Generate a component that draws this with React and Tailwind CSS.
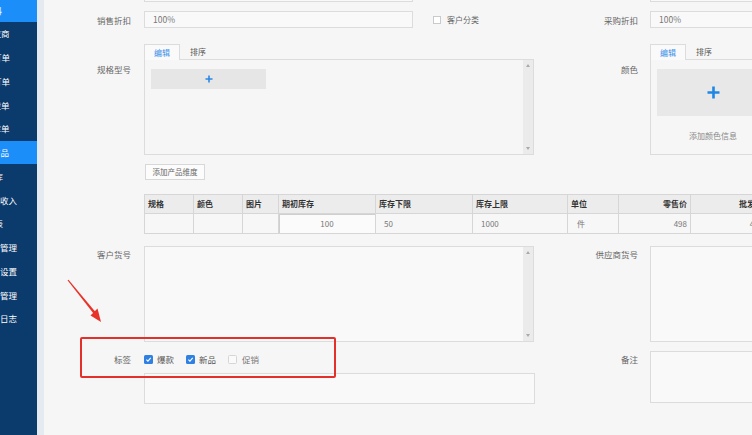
import React from "react";

const sideItems = [
  { t: "商品资料", ml: "ml-[-32px]", active: true },
  { t: "供应商", ml: "ml-[-16px]" },
  { t: "采购订单", ml: "ml-[-24px]" },
  { t: "销售订单", ml: "ml-[-24px]" },
  { t: "调拨单", ml: "ml-[-16px]" },
  { t: "入库单", ml: "ml-[-16px]" },
  { t: "商品", ml: "ml-[-8px]", active: true },
  { t: "仓库", ml: "ml-[-14px]" },
  { t: "其他收入", ml: "ml-[-17px]" },
  { t: "报表", ml: "ml-[-14px]" },
  { t: "仓库管理", ml: "ml-[-17px]" },
  { t: "打印设置", ml: "ml-[-17px]" },
  { t: "账户管理", ml: "ml-[-17px]" },
  { t: "操作日志", ml: "ml-[-17px]" },
];

const LBL = "text-[8.5px] leading-[12px] text-[#666]";
const BOX = "border border-[#dcdcdc] bg-[#f9f9f9]";

function Scrollbar() {
  return (
    <div className="w-[10px] shrink-0 bg-[#ebebeb] flex flex-col justify-between items-center py-[4px]">
      <div className="w-0 h-0 border-l-[2px] border-r-[2px] border-b-[3px] border-l-transparent border-r-transparent border-b-[#aaa]" />
      <div className="w-0 h-0 border-l-[2px] border-r-[2px] border-t-[3px] border-l-transparent border-r-transparent border-t-[#aaa]" />
    </div>
  );
}

function Tabs() {
  return (
    <div className="flex h-[16px]">
      <div className="w-[36px] border border-b-0 border-[#dcdcdc] bg-[#fafafa] flex items-center justify-center text-[8px] text-[#3d8ee8]">
        编辑
      </div>
      <div className="w-[36px] border-b border-[#dcdcdc] flex items-center justify-center text-[8px] text-[#555]">
        排序
      </div>
      <div className="flex-1 border-b border-[#dcdcdc]" />
    </div>
  );
}

function Check({ on }) {
  if (on)
    return (
      <div className="w-[9px] h-[9px] rounded-[1.5px] bg-[#2f80e2] flex items-center justify-center shrink-0">
        <svg width="7" height="7" viewBox="0 0 10 10">
          <path d="M2 5.2 L4.2 7.3 L8.2 2.8" stroke="#fff" strokeWidth="1.6" fill="none" />
        </svg>
      </div>
    );
  return <div className="w-[9px] h-[9px] rounded-[1.5px] border border-[#d6d6d6] bg-[#fafafa] shrink-0" />;
}

const cols = [
  { h: "规格", d: "", w: "w-[49px]", dc: "" },
  { h: "颜色", d: "", w: "w-[49px]", dc: "" },
  { h: "图片", d: "", w: "w-[36px]", dc: "" },
  { h: "期初库存", d: "100", w: "w-[97px]", dc: "justify-center bg-[#fbfbfb] shadow-[inset_0_1px_0_#cfcfcf,inset_1px_0_0_#cfcfcf]" },
  { h: "库存下限", d: "50", w: "w-[97px]", dc: "pl-[8px]" },
  { h: "库存上限", d: "1000", w: "w-[95px]", dc: "pl-[8px]" },
  { h: "单位", d: "件", w: "w-[51px]", dc: "pl-[9px]" },
  { h: "零售价", d: "498", w: "w-[72px]", dc: "justify-end pr-[3px]", hr: true },
  { h: "批发价", d: "498", w: "w-[76px]", dc: "justify-end pr-[3px]", hr: true },
];

export default function App() {
  return (
    <div className="relative w-[752px] h-[435px] overflow-hidden flex bg-[#f6f6f6] font-['Noto_Sans_CJK_SC','Liberation_Sans',sans-serif]">
      {/* sidebar */}
      <div className="w-[37px] shrink-0 bg-[#0b3a6c] overflow-hidden">
        <div className="mt-[-2px] flex flex-col">
          {sideItems.map((it, i) => (
            <div
              key={i}
              className={
                "h-[23.75px] flex items-center text-[8.5px] text-white " +
                (it.active ? "bg-[#1c8ef9]" : "")
              }
            >
              <span className={"shrink-0 whitespace-nowrap " + it.ml}>{it.t}</span>
            </div>
          ))}
        </div>
      </div>
      <div className="w-[7px] shrink-0 bg-[#e5eaf0]" />

      {/* main */}
      <div className="flex-1 flex flex-col overflow-hidden">
        {/* sliver of previous row */}
        <div className="mt-[-15px] h-[17px] flex shrink-0">
          <div className="w-[100px] shrink-0" />
          <div className={"w-[269px] shrink-0 " + BOX} />
          <div className="w-[121px] shrink-0" />
          <div className="w-[116px] shrink-0" />
          <div className={"w-[260px] shrink-0 " + BOX} />
        </div>

        {/* row 1 */}
        <div className="mt-[9px] h-[17px] flex items-center shrink-0">
          <div className={"w-[100px] pr-[13px] text-right shrink-0 " + LBL}>销售折扣</div>
          <div className="w-[390px] shrink-0 flex items-center h-full">
            <div className={"w-[269px] h-full flex items-center pl-[8px] text-[8.5px] text-[#777] " + BOX}>100%</div>
            <div className="ml-[20px] w-[8px] h-[8px] border border-[#cacaca] bg-white" />
            <div className="ml-[6px] text-[8px] text-[#666]">客户分类</div>
          </div>
          <div className={"w-[116px] pr-[12px] text-right shrink-0 " + LBL}>采购折扣</div>
          <div className={"w-[260px] h-full shrink-0 flex items-center pl-[8px] text-[8.5px] text-[#777] " + BOX}>100%</div>
        </div>

        {/* row 2: spec & color */}
        <div className="mt-[16px] flex shrink-0">
          <div className={"w-[100px] pr-[13px] pt-[19px] text-right shrink-0 " + LBL}>规格型号</div>
          <div className="w-[390px] shrink-0">
            <Tabs />
            <div className="h-[95px] flex border border-t-0 border-[#dcdcdc]">
              <div className="flex-1 pl-[6px] pt-[9px]">
                <div className="w-[115px] h-[20px] bg-[#e6e6e6] flex items-center justify-center">
                  <svg width="8" height="8" viewBox="0 0 8 8">
                    <path d="M4 0.5 V7.5 M0.5 4 H7.5" stroke="#2d86e6" strokeWidth="1.6" />
                  </svg>
                </div>
              </div>
              <Scrollbar />
            </div>
          </div>
          <div className={"w-[116px] pr-[12px] pt-[19px] text-right shrink-0 " + LBL}>颜色</div>
          <div className="w-[126px] shrink-0">
            <Tabs />
            <div className="h-[95px] border border-t-0 border-[#dcdcdc] px-[6px] pt-[9px] flex flex-col items-center">
              <div className="w-full h-[47px] bg-[#e8e8e8] flex items-center justify-center">
                <svg width="13" height="13" viewBox="0 0 13 13">
                  <path d="M6.5 0.5 V12.5 M0.5 6.5 H12.5" stroke="#1f86e6" strokeWidth="2.6" />
                </svg>
              </div>
              <div className="mt-[15px] text-[8px] leading-[10px] text-[#888]">添加颜色信息</div>
            </div>
          </div>
        </div>

        {/* button row */}
        <div className="mt-[9px] h-[16px] flex shrink-0">
          <div className="w-[101px] shrink-0" />
          <div className="w-[60px] h-full border border-[#d8d8d8] bg-[#fcfcfc] flex items-center justify-center text-[7.5px] text-[#666]">
            添加产品维度
          </div>
        </div>

        {/* table */}
        <div className="mt-[14px] flex shrink-0">
          <div className="w-[100px] shrink-0" />
          <div className="flex flex-col border-t border-l border-[#d6d6d6] shrink-0">
            <div className="flex h-[19px] bg-[#ececec]">
              {cols.map((c, i) => (
                <div
                  key={i}
                  className={
                    "shrink-0 h-full border-r border-b border-[#d6d6d6] flex items-center text-[8px] font-bold text-[#333] " +
                    c.w +
                    (c.hr ? " justify-end pr-[3px]" : " pl-[3px]")
                  }
                >
                  {c.h}
                </div>
              ))}
            </div>
            <div className="flex h-[20px] bg-[#f7f7f7]">
              {cols.map((c, i) => (
                <div
                  key={i}
                  className={
                    "shrink-0 h-full border-r border-b border-[#d6d6d6] flex items-center text-[8px] text-[#777] " +
                    c.w +
                    " " +
                    c.dc
                  }
                >
                  {c.d}
                </div>
              ))}
            </div>
          </div>
        </div>

        {/* customer code row */}
        <div className="mt-[12px] flex shrink-0">
          <div className={"w-[100px] pr-[13px] pt-[2px] text-right shrink-0 " + LBL}>客户货号</div>
          <div className={"w-[390px] h-[96px] shrink-0 flex justify-end " + BOX}>
            <Scrollbar />
          </div>
          <div className={"w-[116px] pr-[12px] pt-[2px] text-right shrink-0 " + LBL}>供应商货号</div>
          <div className={"w-[260px] h-[96px] shrink-0 " + BOX} />
        </div>

        {/* tags row */}
        <div className="mt-[9px] flex shrink-0">
          <div className={"w-[100px] pr-[13px] pt-[2px] text-right shrink-0 " + LBL}>标签</div>
          <div className="w-[390px] shrink-0">
            <div className="h-[16px] flex items-center text-[8.5px] text-[#555]">
              <Check on />
              <span className="ml-[4px]">爆款</span>
              <span className="ml-[12px]"><Check on /></span>
              <span className="ml-[4px]">新品</span>
              <span className="ml-[12px]"><Check /></span>
              <span className="ml-[5px] text-[#777]">促销</span>
            </div>
            <div className={"mt-[6px] h-[31px] w-[391px] " + BOX} />
          </div>
          <div className={"w-[116px] pr-[12px] pt-[2px] text-right shrink-0 " + LBL}>备注</div>
          <div className={"w-[260px] h-[52px] shrink-0 " + BOX} />
        </div>
      </div>

      {/* annotation overlays */}
      <div className="absolute left-[80px] top-[337px] w-[256px] h-[41px] border-2 border-[#e3302b] rounded-[2px]" />
      <svg className="absolute left-0 top-0" width="752" height="435" viewBox="0 0 752 435">
        <polygon points="67.5,280.3 68.5,279.7 95.5,312 93.5,313.6" fill="#e8332a" />
        <polygon points="101,322 90.5,315.5 97.5,308.5" fill="#e8332a" />
      </svg>
    </div>
  );
}
